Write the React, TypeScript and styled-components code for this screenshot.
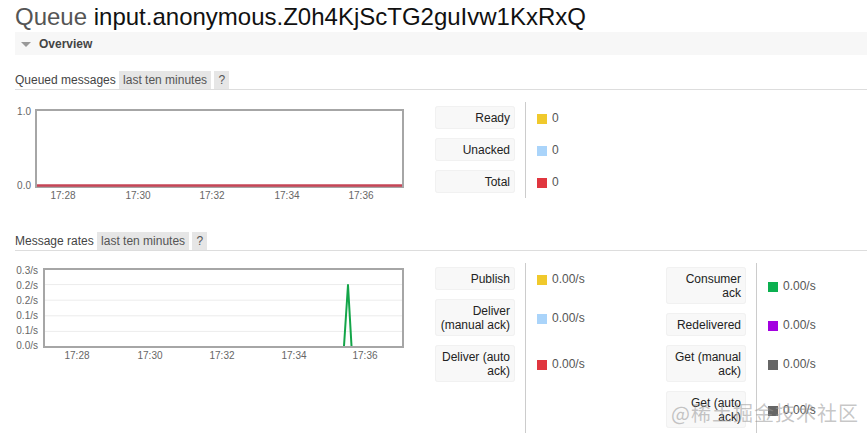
import styled, { createGlobalStyle } from "styled-components";

const GlobalStyle = createGlobalStyle`
  html, body {
    margin: 0;
    padding: 0;
    background: #fff;
  }
  body {
    font-family: "Liberation Sans", Arial, sans-serif;
    font-size: 12px;
    color: #444;
    overflow: hidden;
  }
`;

interface LegendItem {
  label: string;
  value: string;
  color: string;
  tall?: boolean;
}

const queuedLegend: LegendItem[] = [
  { label: "Ready", value: "0", color: "#f0c92c" },
  { label: "Unacked", value: "0", color: "#aad4fa" },
  { label: "Total", value: "0", color: "#e0363f" },
];

const ratesLeft: LegendItem[] = [
  { label: "Publish", value: "0.00/s", color: "#f0c92c" },
  { label: "Deliver (manual ack)", value: "0.00/s", color: "#aad4fa", tall: true },
  { label: "Deliver (auto ack)", value: "0.00/s", color: "#e0363f", tall: true },
];

const ratesRight: LegendItem[] = [
  { label: "Consumer ack", value: "0.00/s", color: "#0cb050", tall: true },
  { label: "Redelivered", value: "0.00/s", color: "#a300e0" },
  { label: "Get (manual ack)", value: "0.00/s", color: "#666666", tall: true },
  { label: "Get (auto ack)", value: "0.00/s", color: "#666666", tall: true },
];

function Legend({ items }: { items: LegendItem[] }) {
  return (
    <LegendGroup>
      <LabelColumn>
        {items.map((it) => (
          <LabelBox key={it.label} $tall={it.tall}>{it.label}</LabelBox>
        ))}
      </LabelColumn>
      <ValueColumn>
        {items.map((it) => (
          <ValueRow key={it.label} $tall={it.tall}>
            <Swatch $color={it.color} />
            {it.value}
          </ValueRow>
        ))}
      </ValueColumn>
    </LegendGroup>
  );
}

const ticks1 = [
  { t: "17:28", x: 48 },
  { t: "17:30", x: 123 },
  { t: "17:32", x: 197 },
  { t: "17:34", x: 272 },
  { t: "17:36", x: 346 },
];

function QueuedChart() {
  return (
    <ChartSvg width={400} height={102} viewBox="0 0 400 102">
      <rect x={21} y={9} width={367} height={77} fill="#fff" stroke="#a6a6a6" strokeWidth={2} />
      <line x1={22} y1={84.5} x2={387} y2={84.5} stroke="#c64556" strokeWidth={2.5} />
      <text x={16} y={14} textAnchor="end">1.0</text>
      <text x={16} y={88} textAnchor="end">0.0</text>
      {ticks1.map((k) => (
        <text key={k.t} x={k.x} y={98} textAnchor="middle">{k.t}</text>
      ))}
    </ChartSvg>
  );
}

const ticks2 = [
  { t: "17:28", x: 62 },
  { t: "17:30", x: 135 },
  { t: "17:32", x: 207 },
  { t: "17:34", x: 279 },
  { t: "17:36", x: 350 },
];

const yLabels2 = ["0.3/s", "0.2/s", "0.2/s", "0.1/s", "0.1/s", "0.0/s"];

function RatesChart() {
  const top = 7;
  const step = 15.6;
  return (
    <ChartSvg width={400} height={100} viewBox="0 0 400 100">
      <rect x={29} y={top} width={359} height={78} fill="#fff" stroke="#a6a6a6" strokeWidth={2} />
      {[1, 2, 3, 4].map((i) => (
        <line key={i} x1={30} x2={387} y1={top + step * i} y2={top + step * i} stroke="#ececec" strokeWidth={1} />
      ))}
      <polyline
        points="329,84 333,23 336.5,84"
        fill="none"
        stroke="#13a549"
        strokeWidth={2}
        strokeLinejoin="round"
      />
      {yLabels2.map((l, i) => (
        <text key={i} x={23} y={11.5 + 15 * i} textAnchor="end">{l}</text>
      ))}
      {ticks2.map((k) => (
        <text key={k.t} x={k.x} y={97} textAnchor="middle">{k.t}</text>
      ))}
    </ChartSvg>
  );
}

export default function App() {
  return (
    <>
      <GlobalStyle />
      <Page>
        <Title>
          <span className="kind">Queue</span> input.anonymous.Z0h4KjScTG2guIvw1KxRxQ
        </Title>
        <OverviewBar>
          <Triangle />
          Overview
        </OverviewBar>

        <SectionHeader>
          Queued messages <Badge>last ten minutes</Badge> <Badge>?</Badge>
        </SectionHeader>
        <SectionBody>
          <QueuedChart />
          <Legends>
            <Legend items={queuedLegend} />
          </Legends>
        </SectionBody>

        <SectionHeader $spaced>
          Message rates <Badge>last ten minutes</Badge> <Badge>?</Badge>
        </SectionHeader>
        <SectionBody>
          <RatesChart />
          <Legends>
            <Legend items={ratesLeft} />
            <Legend items={ratesRight} />
          </Legends>
        </SectionBody>

        <Watermark>@稀土掘金技术社区</Watermark>
      </Page>
    </>
  );
}

const Page = styled.div`
  position: relative;
  box-sizing: border-box;
  width: 867px;
  height: 441px;
  padding-left: 15px;
  overflow: hidden;
`;

const Title = styled.h1`
  margin: 0;
  padding-top: 3px;
  font-size: 24px;
  line-height: 28px;
  font-weight: normal;
  color: #111;
  white-space: nowrap;
  .kind {
    color: #555;
  }
`;

const OverviewBar = styled.div`
  margin-top: 1px;
  height: 23px;
  display: flex;
  align-items: center;
  gap: 8px;
  padding-left: 6px;
  background: #f7f7f7;
  font-weight: bold;
  font-size: 12px;
  color: #444;
`;

const Triangle = styled.span`
  width: 0;
  height: 0;
  border-left: 5.5px solid transparent;
  border-right: 5.5px solid transparent;
  border-top: 5px solid #999;
  margin-top: 1px;
`;

const SectionHeader = styled.div<{ $spaced?: boolean }>`
  margin-top: ${(p) => (p.$spaced ? "29px" : "16px")};
  height: 18px;
  line-height: 18px;
  border-bottom: 1px solid #ddd;
  color: #444;
  white-space: nowrap;
`;

const Badge = styled.span`
  display: inline-block;
  padding: 0 4px;
  background: #e6e6e6;
  line-height: 18px;
  color: #555;
`;

const SectionBody = styled.div`
  display: flex;
  align-items: flex-start;
`;

const ChartSvg = styled.svg`
  display: block;
  margin-top: 11px;
  flex: none;
  text {
    font-family: "Liberation Sans", Arial, sans-serif;
    font-size: 10px;
    fill: #666;
  }
`;

const Legends = styled.div`
  display: flex;
  margin-top: 12px;
  margin-left: 20px;
`;

const LegendGroup = styled.div`
  display: flex;
  width: 231px;
`;

const LabelColumn = styled.div`
  display: flex;
  flex-direction: column;
  gap: 9px;
  padding: 4px 10px 5px 0;
  border-right: 1px solid #ccc;
`;

const LabelBox = styled.div<{ $tall?: boolean }>`
  box-sizing: border-box;
  width: 80px;
  height: ${(p) => (p.$tall ? "37px" : "23px")};
  padding: 4.5px 5px 4.5px 2px;
  line-height: 14px;
  text-align: right;
  background: #f8f8f8;
  box-shadow: 0 0 0 1px #f1f1f1 inset;
  border-radius: 3px;
  color: #222;
`;

const ValueColumn = styled.div`
  display: flex;
  flex-direction: column;
  gap: 9px;
  padding: 4px 0 5px 11px;
`;

const ValueRow = styled.div<{ $tall?: boolean }>`
  height: ${(p) => (p.$tall ? "37px" : "23px")};
  display: flex;
  align-items: center;
  gap: 5px;
  color: #555;
  white-space: nowrap;
`;

const Swatch = styled.span<{ $color: string }>`
  width: 10px;
  height: 10px;
  background: ${(p) => p.$color};
  margin-top: 2px;
`;

const Watermark = styled.div`
  position: absolute;
  right: 8px;
  bottom: 14px;
  font-family: "Noto Sans CJK SC", sans-serif;
  font-size: 20px;
  letter-spacing: 1px;
  color: rgba(150, 150, 150, 0.55);
  pointer-events: none;
`;
